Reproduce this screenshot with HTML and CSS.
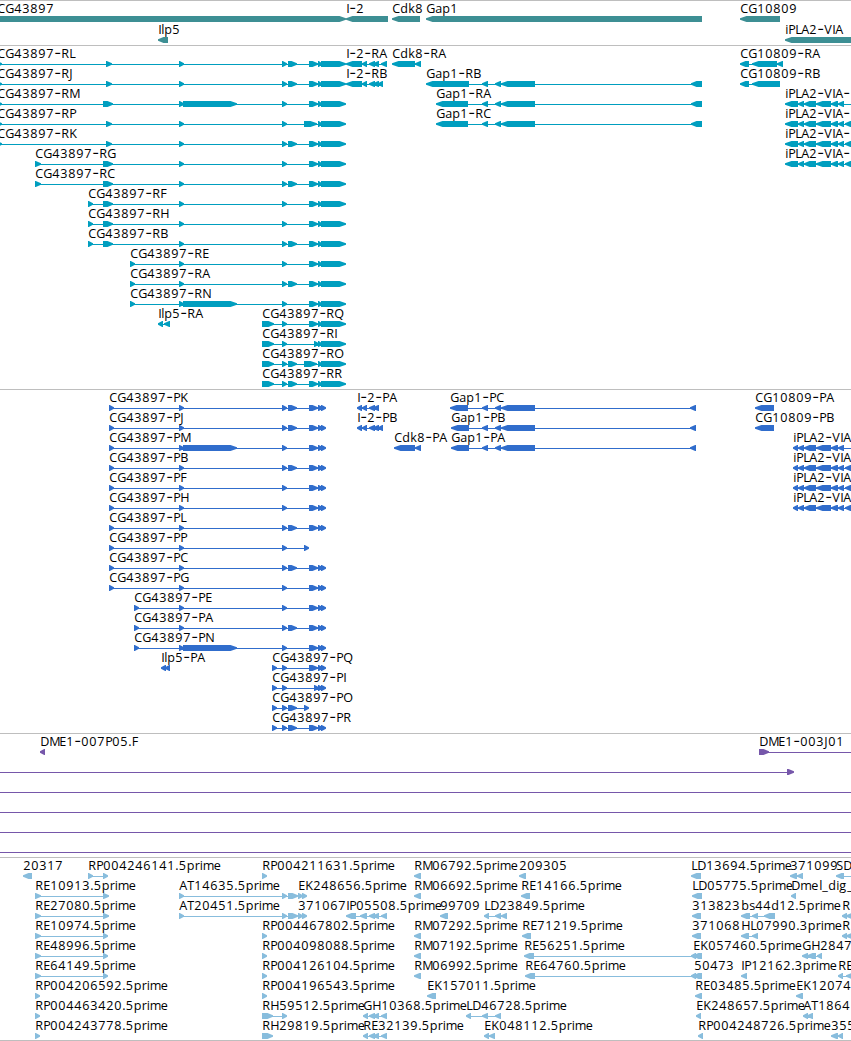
FILE: index.html
```
<!DOCTYPE html>
<html lang="en">
<head>
<meta charset="utf-8">
<title>Genome browser</title>
<link rel="stylesheet" href="styles.css">
</head>
<body>
<main class="browser">
  <section class="track track-genes"><svg class="lane" data-track="genes"></svg></section>
  <section class="track track-transcripts"><svg class="lane" data-track="transcripts"></svg></section>
  <section class="track track-cds"><svg class="lane" data-track="cds"></svg></section>
  <section class="track track-bac"><svg class="lane" data-track="bac"></svg></section>
  <section class="track track-est"><svg class="lane" data-track="est"></svg></section>
</main>
<script src="tracks.js"></script>
</body>
</html>
```
FILE: styles.css
```
body {
  margin: 0;
  background: #fff;
  overflow: hidden;
}
.browser {
  display: flex;
  flex-direction: column;
  width: 851px;
  height: 1041px;
  box-sizing: border-box;
  border-bottom: 1px solid #bebebe;
}
.track {
  box-sizing: border-box;
  border-top: 1px solid #bebebe;
}
.lane {
  display: block;
  width: 100%;
  height: 100%;
  overflow: visible;
}
.track-genes { height: 45px; color: #3d8f94; }
.track-transcripts { height: 344px; color: #009ebf; }
.track-cds { height: 344px; color: #306dcc; }
.track-bac { height: 124px; color: #7657aa; }
.track-est { height: 183px; color: #88bddd; }
.shape { fill: currentColor; }
.label {
  font-family: "Open Sans", "Noto Sans", sans-serif;
  font-size: 12.6px;
  fill: #000;
}
.dash {
  font-family: Inter, "Open Sans", sans-serif;
  font-size: 15px;
}
```
FILE: tracks.js
```
const SVG = 'http://www.w3.org/2000/svg';

// Advance widths of label characters, in pixels.
const ADVANCE = {
  A: 8, C: 8, D: 9, E: 7, F: 7, G: 9, H: 9, I: 3, J: 4, K: 8, L: 6, M: 10,
  N: 9, O: 9, P: 7, Q: 9, R: 8, S: 7, T: 7, V: 8,
  a: 7, b: 8, d: 8, e: 8, g: 8, i: 3, k: 7, l: 3, m: 11, p: 8, r: 5, s: 6,
  '-': 7, '.': 3.5, _: 6
};

// A feature is [row, label, labelX, strand, blocks]; blocks are [start, end] pairs.
const list = { genes: [], transcripts: [], cds: [], bac: [], est: [] };
const add = (track, row, label, x, strand, ...blocks) =>
  list[track].push({ row, label, x, strand, blocks });

add('genes', 0, 'CG43897', -3, 1, [-20, 346]);
add('genes', 0, 'I-2', 346, -1, [346, 388]);
add('genes', 0, 'Cdk8', 392, -1, [392, 420]);
add('genes', 0, 'Gap1', 426, -1, [426, 702]);
add('genes', 0, 'CG10809', 740, -1, [740, 780]);
add('genes', 1, 'Ilp5', 158, -1, [158, 168]);
add('genes', 1, 'iPLA2-VIA', 785, -1, [785, 870]);

const B = [179, 184], LONG = [183, 237], C = [282, 287], D = [288, 297];
const END = [[309, 318], [318, 322], [321, 346]];
const P_END = [[309, 318], [318, 323], [321, 326]];
const ex = [106, 112], EX = [103, 113];

[
  ['RL', -3, [-3, 2], ex, B, C, D, ...END],
  ['RJ', -3, [-3, 2], ex, B, C, D, ...END],
  ['RM', -3, [-3, 2], EX, B, LONG, C, ...END],
  ['RP', -3, [-3, 2], ex, B, C, [304, 317], [318, 322], [321, 346]],
  ['RK', -3, [-3, 2], ex, B, C, D, ...END],
  ['RG', 35, [35, 41], EX, B, C, ...END],
  ['RC', 35, [35, 41], EX, B, C, D, ...END],
  ['RF', 88, [88, 93], EX, B, C, ...END],
  ['RH', 88, [88, 93], EX, B, C, ...END],
  ['RB', 88, [88, 93], EX, B, C, D, ...END],
  ['RE', 130, [130, 135], B, C, ...END],
  ['RA', 130, [130, 135], B, C, D, ...END],
  ['RN', 130, [130, 135], B, LONG, C, ...END],
  ['RQ', 262, [262, 274], C, ...END],
  ['RI', 262, [262, 274], C, [314, 319], [318, 322], [321, 346]],
  ['RO', 262, [262, 274], C, D, [304, 317], [318, 322], [321, 346]],
  ['RR', 262, [262, 274], C, D, ...END]
].forEach(([id, x, ...b], row) => add('transcripts', row, 'CG43897-' + id, x, 1, ...b));

add('transcripts', 13, 'Ilp5-RA', 158, -1, [158, 163], [164, 170]);
add('transcripts', 0, 'I-2-RA', 346, -1, [346, 362], [362, 367], [369, 375], [373, 379], [381, 387]);
add('transcripts', 1, 'I-2-RB', 346, -1, [346, 362], [362, 367], [369, 375], [373, 379], [378, 383]);
add('transcripts', 0, 'Cdk8-RA', 392, -1, [392, 415], [415, 421]);
const GAP = [[482, 488], [495, 501], [501, 535]];
add('transcripts', 1, 'Gap1-RB', 426, -1, [426, 469], ...GAP, [691, 702]);
add('transcripts', 2, 'Gap1-RA', 436, -1, [436, 468], ...GAP, [691, 702]);
add('transcripts', 3, 'Gap1-RC', 436, -1, [436, 468], ...GAP, [691, 702]);
add('transcripts', 0, 'CG10809-RA', 740, -1, [740, 749], [752, 777], [777, 783]);
add('transcripts', 1, 'CG10809-RB', 740, -1, [740, 749], [752, 780]);
const IPLA = [[798, 804], [804, 816], [816, 831], [831, 838], [838, 844]];
for (let i = 0; i < 4; i++) {
  const tail = i ? [[845, 851], [851, 860]] : [[855, 862]];
  add('transcripts', 2 + i, 'iPLA2-VIA-', 785, -1, [785, 798], ...IPLA, ...tail);
  add('cds', 2 + i, 'iPLA2-VIA', 793, -1, [793, 798], ...IPLA, ...tail);
}

const P = [109, 114], P2 = [134, 139], P3 = [272, 277];
[
  ['PK', P, B, C, D, ...P_END],
  ['PJ', P, B, C, D, ...P_END],
  ['PM', P, B, LONG, C, ...P_END],
  ['PB', P, B, C, D, ...P_END],
  ['PF', P, B, C, ...P_END],
  ['PH', P, B, C, ...P_END],
  ['PL', P, B, C, D, ...P_END],
  ['PP', P, B, C, [304, 309]],
  ['PC', P, B, C, D, ...P_END],
  ['PG', P, B, C, ...P_END],
  ['PE', P2, B, C, ...P_END],
  ['PA', P2, B, C, D, ...P_END],
  ['PN', P2, B, LONG, C, ...P_END],
  ['PQ', P3, C, ...P_END],
  ['PI', P3, C, [314, 319], [318, 323], [321, 326]],
  ['PO', P3, C, D, [304, 309]],
  ['PR', P3, C, D, ...P_END]
].forEach(([id, ...b], row) => add('cds', row, 'CG43897-' + id, b[0][0], 1, ...b));

add('cds', 13, 'Ilp5-PA', 161, -1, [161, 166], [165, 170]);
add('cds', 0, 'I-2-PA', 357, -1, [357, 362], [362, 367], [369, 375], [373, 379]);
add('cds', 1, 'I-2-PB', 357, -1, [357, 362], [362, 367], [369, 375], [373, 379], [378, 383]);
add('cds', 2, 'Cdk8-PA', 394, -1, [394, 415], [415, 421]);
add('cds', 0, 'Gap1-PC', 450, -1, [450, 468], ...GAP, [690, 696]);
add('cds', 1, 'Gap1-PB', 451, -1, [451, 469], ...GAP, [690, 696]);
add('cds', 2, 'Gap1-PA', 451, -1, [451, 469], ...GAP, [690, 696]);
add('cds', 0, 'CG10809-PA', 755, -1, [755, 774]);
add('cds', 1, 'CG10809-PB', 755, -1, [755, 774]);

add('bac', 0, 'DME1-007P05.F', 40, -1, [40, 45]);
add('bac', 0, 'DME1-003J01', 759, 1, [759, 769], [900, 910]);
add('bac', 1, '', 0, 1, [-20, -10], [787, 794]);
for (let row = 2; row < 6; row++) add('bac', row, '', 0, 1, [-20, -10], [900, 910]);

const est = (row, label, x, strand, ...blocks) => add('est', row, label, x, strand, ...blocks);
est(0, '20317', 23, -1, [23, 32]);
est(0, 'RP004246141.5prime', 88, 1, [88, 93], [103, 108]);
['RE10913', 'RE27080', 'RE10974', 'RE48996', 'RE64149'].forEach((id, i) =>
  est(1 + i, id + '.5prime', 35, 1, [35, 41], [103, i < 2 ? 109 : 108]));
['RP004206592', 'RP004463420', 'RP004243778'].forEach((id, i) =>
  est(6 + i, id + '.5prime', 35, 1, [35, 40]));
est(0, 'RP004211631.5prime', 262, 1, [262, 267]);
['RP004467802', 'RP004098088', 'RP004126104', 'RP004196543'].forEach((id, i) =>
  est(3 + i, id + '.5prime', 262, 1, [262, 267]));
est(1, 'AT14635.5prime', 179, 1, B, C, [288, 298]);
est(2, 'AT20451.5prime', 179, 1, B, C, [288, 298]);
est(1, 'EK248656.5prime', 298, 1, [298, 303], [302, 307]);
est(2, '371067', 298, 1, [298, 303], [302, 307]);
est(7, 'RH59512.5prime', 262, 1, [262, 273], [282, 287]);
est(8, 'RH29819.5prime', 262, 1, [262, 273]);
est(2, 'IP05508.5prime', 346, -1, [346, 356], [360, 367], [369, 375], [373, 379], [381, 387]);
est(7, 'GH10368.5prime', 363, -1, [363, 368], [369, 375], [373, 379], [381, 387]);
est(8, 'RE32139.5prime', 363, -1, [363, 368], [369, 375], [373, 379], [381, 387]);
[[0, 'RM06792'], [1, 'RM06692'], [3, 'RM07292'], [4, 'RM07192'], [5, 'RM06992']].forEach(([row, id]) =>
  est(row, id + '.5prime', 414, -1, [414, 421]));
est(2, '99709', 440, -1, [440, 448]);
est(6, 'EK157011.5prime', 427, -1, [427, 436]);
est(2, 'LD23849.5prime', 484, -1, [484, 489], [495, 501], [501, 507]);
est(7, 'LD46728.5prime', 466, -1, [466, 471], [482, 488], [495, 501]);
est(8, 'EK048112.5prime', 484, -1, [484, 489], [489, 495]);
est(0, '209305', 519, -1, [519, 526]);
est(1, 'RE14166.5prime', 521, -1, [521, 530]);
est(3, 'RE71219.5prime', 522, -1, [522, 531]);
est(4, 'RE56251.5prime', 524, -1, [524, 534], [691, 696], [693, 702]);
est(5, 'RE64760.5prime', 525, -1, [525, 535], [691, 696], [693, 702]);
est(0, 'LD13694.5prime', 691, -1, [691, 701]);
est(1, 'LD05775.5prime', 692, -1, [692, 702]);
est(2, '313823', 692, -1, [692, 701]);
est(3, '371068', 692, -1, [692, 701]);
est(4, 'EK057460.5prime', 693, -1);
est(5, '50473', 694, -1);
est(6, 'RE03485.5prime', 695, -1, [695, 702]);
est(7, 'EK248657.5prime', 696, -1, [696, 701]);
est(8, 'RP004248726.5prime', 698, -1, [698, 703]);
est(2, 'bs44d12.5prime', 741, -1, [741, 750], [752, 758], [764, 775]);
est(3, 'HL07990.3prime', 741, -1, [741, 749], [752, 758]);
est(5, 'IP12162.3prime', 741, -1, [741, 747]);
est(0, '371099', 790, -1, [790, 797], [797, 803]);
est(1, 'Dmel_dig_', 791, -1, [791, 796]);
est(4, 'GH2847', 802, -1, [802, 808], [807, 816], [817, 822]);
est(6, 'EK12074', 796, -1, [796, 803]);
est(7, 'AT1864', 803, -1, [803, 808], [807, 813]);
est(0, 'SD', 836, -1, [836, 844], [870, 880]);
est(2, 'R', 842, -1, [842, 847], [846, 856]);
est(3, 'R', 842, -1, [842, 847], [846, 856]);
est(5, 'RE', 838, -1, [838, 843], [846, 856]);
est(8, '355', 831, -1, [831, 838], [838, 843]);

function node(parent, name, attrs, text) {
  const el = document.createElementNS(SVG, name);
  for (const key in attrs) el.setAttribute(key, attrs[key]);
  if (text) el.textContent = text;
  parent.appendChild(el);
  return el;
}

// Arrow-ended block pointing along the strand.
function block([a, b], strand, y) {
  const head = b - a > 12 ? 6.5 : Math.min(b - a - 0.8, 5.5);
  const back = strand > 0 ? a : b;
  const tip = strand > 0 ? b : a;
  const neck = tip - strand * head;
  return `M${back} ${y}H${neck}L${tip} ${y + 2.2}V${y + 3.8}L${neck} ${y + 6}H${back}Z`;
}

function label(svg, feature, y) {
  const text = node(svg, 'text', { class: 'label', y });
  let x = feature.x;
  feature.label.split('-').forEach((part, i) => {
    if (i) {
      node(text, 'tspan', { class: 'dash', x: x + 0.2 }, '-');
      x += ADVANCE['-'];
    }
    if (!part) return;
    const xs = [...part].map(ch => {
      const at = x;
      x += ADVANCE[ch] || 8;
      return at + 0.2;
    });
    node(text, 'tspan', { x: xs.join(' ') }, part);
  });
}

for (const svg of document.querySelectorAll('.lane')) {
  const name = svg.dataset.track;
  const pitch = name === 'genes' ? 21 : 20;
  for (const f of list[name]) {
    const top = f.row * pitch;
    if (f.blocks.length) {
      const from = f.blocks[0][0] + 1;
      const to = f.blocks[f.blocks.length - 1][1] - 1;
      node(svg, 'rect', { class: 'shape', x: from, y: top + 18, width: to - from, height: 1 });
      node(svg, 'path', { class: 'shape', d: f.blocks.map(b => block(b, f.strand, top + 15)).join('') });
    }
    if (f.label) label(svg, f, top + 12);
  }
}
```
